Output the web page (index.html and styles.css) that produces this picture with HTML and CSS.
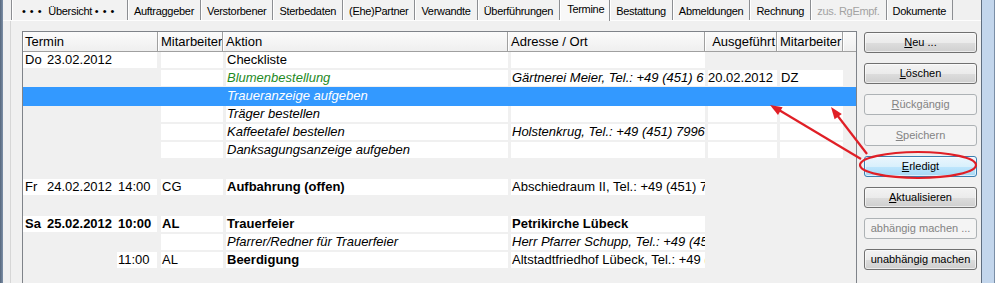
FILE: index.html
```html
<!DOCTYPE html>
<html lang="de">
<head>
  <meta charset="UTF-8" />
  <title>Termine</title>
  <link rel="stylesheet" href="styles.css">
</head>
<body>
  <div class="window">
    <div class="edge-left"></div>

    <div class="client">
      <div class="tabs">
        <div class="tab first"><span class="dots">•••</span> Übersicht <span class="dots">•••</span></div>
        <div class="tab">Auftraggeber</div>
        <div class="tab">Verstorbener</div>
        <div class="tab">Sterbedaten</div>
        <div class="tab">(Ehe)Partner</div>
        <div class="tab">Verwandte</div>
        <div class="tab">Überführungen</div>
        <div class="tab active">Termine</div>
        <div class="tab">Bestattung</div>
        <div class="tab">Abmeldungen</div>
        <div class="tab">Rechnung</div>
        <div class="tab off">zus. RgEmpf.</div>
        <div class="tab">Dokumente</div>
      </div>

      <div class="panel">
        <div class="list">
          <div class="head">
            <div class="hc">Termin</div>
            <div class="hc">Mitarbeiter</div>
            <div class="hc">Aktion</div>
            <div class="hc">Adresse / Ort</div>
            <div class="hc r">Ausgeführt</div>
            <div class="hc">Mitarbeiter</div>
            <div class="hc last"></div>
          </div>

          <div class="row">
            <div class="cell c1 w"><span class="wd">Do</span><span class="dt">23.02.2012</span><span class="tm"></span></div>
            <div class="cell w"></div>
            <div class="cell w">Checkliste</div>
            <div class="cell w"></div>
            <div class="cell"></div>
            <div class="cell"></div>
          </div>

          <div class="row">
            <div class="cell c1"></div>
            <div class="cell w"></div>
            <div class="cell w green">Blumenbestellung</div>
            <div class="cell w it">Gärtnerei Meier, Tel.: +49 (451) 6 12 34 56</div>
            <div class="cell w tight">20.02.2012</div>
            <div class="cell w">DZ</div>
          </div>

          <div class="row sel">
            <div class="cell c1"></div>
            <div class="cell"></div>
            <div class="cell">Traueranzeige aufgeben</div>
            <div class="cell"></div>
            <div class="cell"></div>
            <div class="cell"></div>
          </div>

          <div class="row">
            <div class="cell c1"></div>
            <div class="cell w"></div>
            <div class="cell w it">Träger bestellen</div>
            <div class="cell w"></div>
            <div class="cell w"></div>
            <div class="cell w"></div>
          </div>

          <div class="row">
            <div class="cell c1"></div>
            <div class="cell w"></div>
            <div class="cell w it">Kaffeetafel bestellen</div>
            <div class="cell w it">Holstenkrug, Tel.: +49 (451) 7996 123</div>
            <div class="cell w"></div>
            <div class="cell w"></div>
          </div>

          <div class="row">
            <div class="cell c1"></div>
            <div class="cell w"></div>
            <div class="cell w it">Danksagungsanzeige aufgeben</div>
            <div class="cell w"></div>
            <div class="cell w"></div>
            <div class="cell w"></div>
          </div>

          <div class="row empty"></div>

          <div class="row">
            <div class="cell c1 w"><span class="wd">Fr</span><span class="dt">24.02.2012</span><span class="tm">14:00</span></div>
            <div class="cell w">CG</div>
            <div class="cell w b">Aufbahrung (offen)</div>
            <div class="cell w">Abschiedraum II, Tel.: +49 (451) 7 89 01</div>
            <div class="cell"></div>
            <div class="cell"></div>
          </div>

          <div class="row empty"></div>

          <div class="row b">
            <div class="cell c1 w"><span class="wd">Sa</span><span class="dt">25.02.2012</span><span class="tm">10:00</span></div>
            <div class="cell w">AL</div>
            <div class="cell w">Trauerfeier</div>
            <div class="cell w">Petrikirche Lübeck</div>
            <div class="cell"></div>
            <div class="cell"></div>
          </div>

          <div class="row">
            <div class="cell c1"></div>
            <div class="cell w"></div>
            <div class="cell w it">Pfarrer/Redner für Trauerfeier</div>
            <div class="cell w it">Herr Pfarrer Schupp, Tel.: +49 (451) 3 45 67</div>
            <div class="cell"></div>
            <div class="cell"></div>
          </div>

          <div class="row">
            <div class="cell c1"><span class="wd"></span><span class="dt"></span><span class="tm w">11:00</span></div>
            <div class="cell w">AL</div>
            <div class="cell w b">Beerdigung</div>
            <div class="cell w">Altstadtfriedhof Lübeck, Tel.: +49 (451) 1 22 33</div>
            <div class="cell"></div>
            <div class="cell"></div>
          </div>
        </div>

        <div class="buttons">
          <div class="btn"><u>N</u>eu ...</div>
          <div class="btn"><u>L</u>öschen</div>
          <div class="btn off"><u>R</u>ückgängig</div>
          <div class="btn off"><u>S</u>peichern</div>
          <div class="btn hot"><u>E</u>rledigt</div>
          <div class="btn"><u>A</u>ktualisieren</div>
          <div class="btn off">abhängig machen ...</div>
          <div class="btn">unabhängig machen</div>
        </div>
      </div>
    </div>

    <div class="edge-right"></div>

    <svg class="marks" width="995" height="283" viewBox="0 0 995 283">
      <ellipse cx="918" cy="165" rx="58" ry="13" fill="none" stroke="#e01f26" stroke-width="2.2"/>
      <line x1="861" y1="159" x2="779" y2="110" stroke="#e01f26" stroke-width="2.2"/>
      <polygon points="770,105 782.6,107.3 778,115" fill="#e01f26"/>
      <line x1="867" y1="154" x2="837" y2="115" stroke="#e01f26" stroke-width="2.2"/>
      <polygon points="831,107 841.8,113.9 834.6,119.3" fill="#e01f26"/>
    </svg>
  </div>
</body>
</html>
```

FILE: styles.css
```css
body {
  margin: 0;
  background: #f0f0f0;
  font-family: "Liberation Sans", Arial, sans-serif;
  color: #000;
}

.window {
  position: relative;
  display: flex;
  width: 995px;
  height: 283px;
  overflow: hidden;
  background: #f0f0f0;
}

.edge-left {
  width: 3px;
  background: linear-gradient(to right, #56677c, #7d90a8);
}

.edge-right {
  width: 14px;
  box-sizing: border-box;
  border-left: 1px solid #5f6e80;
  border-right: 1px solid #7a8ea6;
  background: #c3d6ec;
}

.client {
  flex: 1;
  display: flex;
  flex-direction: column;
}

/* tab strip */
.tabs {
  display: flex;
  height: 20px;
  padding-left: 8px;
  border-bottom: 1px solid #fdfdfd;
}

.tab {
  padding: 0 6px;
  font-size: 11px;
  line-height: 22px;
  letter-spacing: -0.3px;
  white-space: nowrap;
  background: #f2f2f2;
  border-right: 1px solid #8c8e92;
  box-shadow: inset 1px 0 0 #ffffff;
}

.tab.first {
  border-left: 1px solid #8c8e92;
  width: 117px;
  box-sizing: border-box;
  padding: 0 0 0 10px;
}

.dots {
  letter-spacing: 4px;
}

.tab.active {
  background: #f8f8f8;
  line-height: 18px;
  margin-bottom: -1px;
  padding: 0 5px 0 7px;
}

.tab.off {
  color: #a2a2a2;
}

/* page area */
.panel {
  flex: 1;
  display: flex;
  margin: 0 1px 0 7px;
  padding: 10px 3px 0 11px;
  border-left: 1px solid #d6d6d6;
  gap: 7px;
}

.list {
  width: 833px;
  height: 270px;
  border: 1px solid #7f8389;
  border-bottom: none;
  font-size: 13px;
}

.head,
.row {
  display: grid;
  grid-template-columns: 135px 65px 285px 197px 72px 66px 13px;
}

.head {
  height: 19px;
  border-bottom: 1px solid #a0a0a0;
  background: linear-gradient(#fbfbfb, #efefef);
}

.hc {
  padding-left: 3px;
  line-height: 19px;
  white-space: nowrap;
  overflow: hidden;
  border-right: 1px solid #a0a0a0;
  box-shadow: inset 1px 0 0 #ffffff;
}

.hc:first-child {
  padding-left: 2px;
}

.hc.r {
  text-align: right;
  padding-right: 1px;
}

.hc.last {
  border-right: none;
}

.row {
  height: 18px;
}

.row.empty {
  height: 19px;
}

.cell {
  margin: 0 0 2px 3px;
  padding-left: 1px;
  height: 16px;
  line-height: 16px;
  white-space: nowrap;
  overflow: hidden;
}

.cell.c1 {
  display: flex;
  margin: 0 1px 2px 0;
  padding-left: 2px;
}

.cell.tight {
  padding-left: 0;
}

.w {
  background: #ffffff;
}

.wd {
  width: 22px;
  flex: none;
}

.dt {
  width: 70px;
  flex: none;
}

.tm {
  flex: 1;
  padding-left: 1px;
}

.it {
  font-style: italic;
}

.b,
.b .cell {
  font-weight: bold;
}

.green {
  color: #1f8a1f;
  font-style: italic;
}

.row.sel {
  background: #3399ff;
  height: 19px;
  margin-top: -1px;
}

.row.sel .cell {
  color: #ffffff;
  font-style: italic;
  margin-top: 1px;
}

/* buttons */
.buttons {
  width: 113px;
  display: flex;
  flex-direction: column;
  gap: 10px;
  padding-top: 1px;
}

.btn {
  height: 21px;
  box-sizing: border-box;
  border: 1px solid #707070;
  border-radius: 3px;
  background: linear-gradient(#f3f3f3 0%, #ebebeb 50%, #dddddd 51%, #cfcfcf 100%);
  box-shadow: inset 0 0 0 1px rgba(255, 255, 255, 0.6);
  font-size: 11px;
  line-height: 19px;
  text-align: center;
  white-space: nowrap;
}

.btn.off {
  border-color: #adb2b5;
  background: #f4f4f4;
  box-shadow: none;
  color: #838383;
}

.btn.hot {
  border-color: #3c7fb1;
  background: linear-gradient(#eaf6fd 0%, #d9f0fc 50%, #bee6fd 51%, #a7d9f5 100%);
}

.marks {
  position: absolute;
  left: 0;
  top: 0;
  pointer-events: none;
}
```
